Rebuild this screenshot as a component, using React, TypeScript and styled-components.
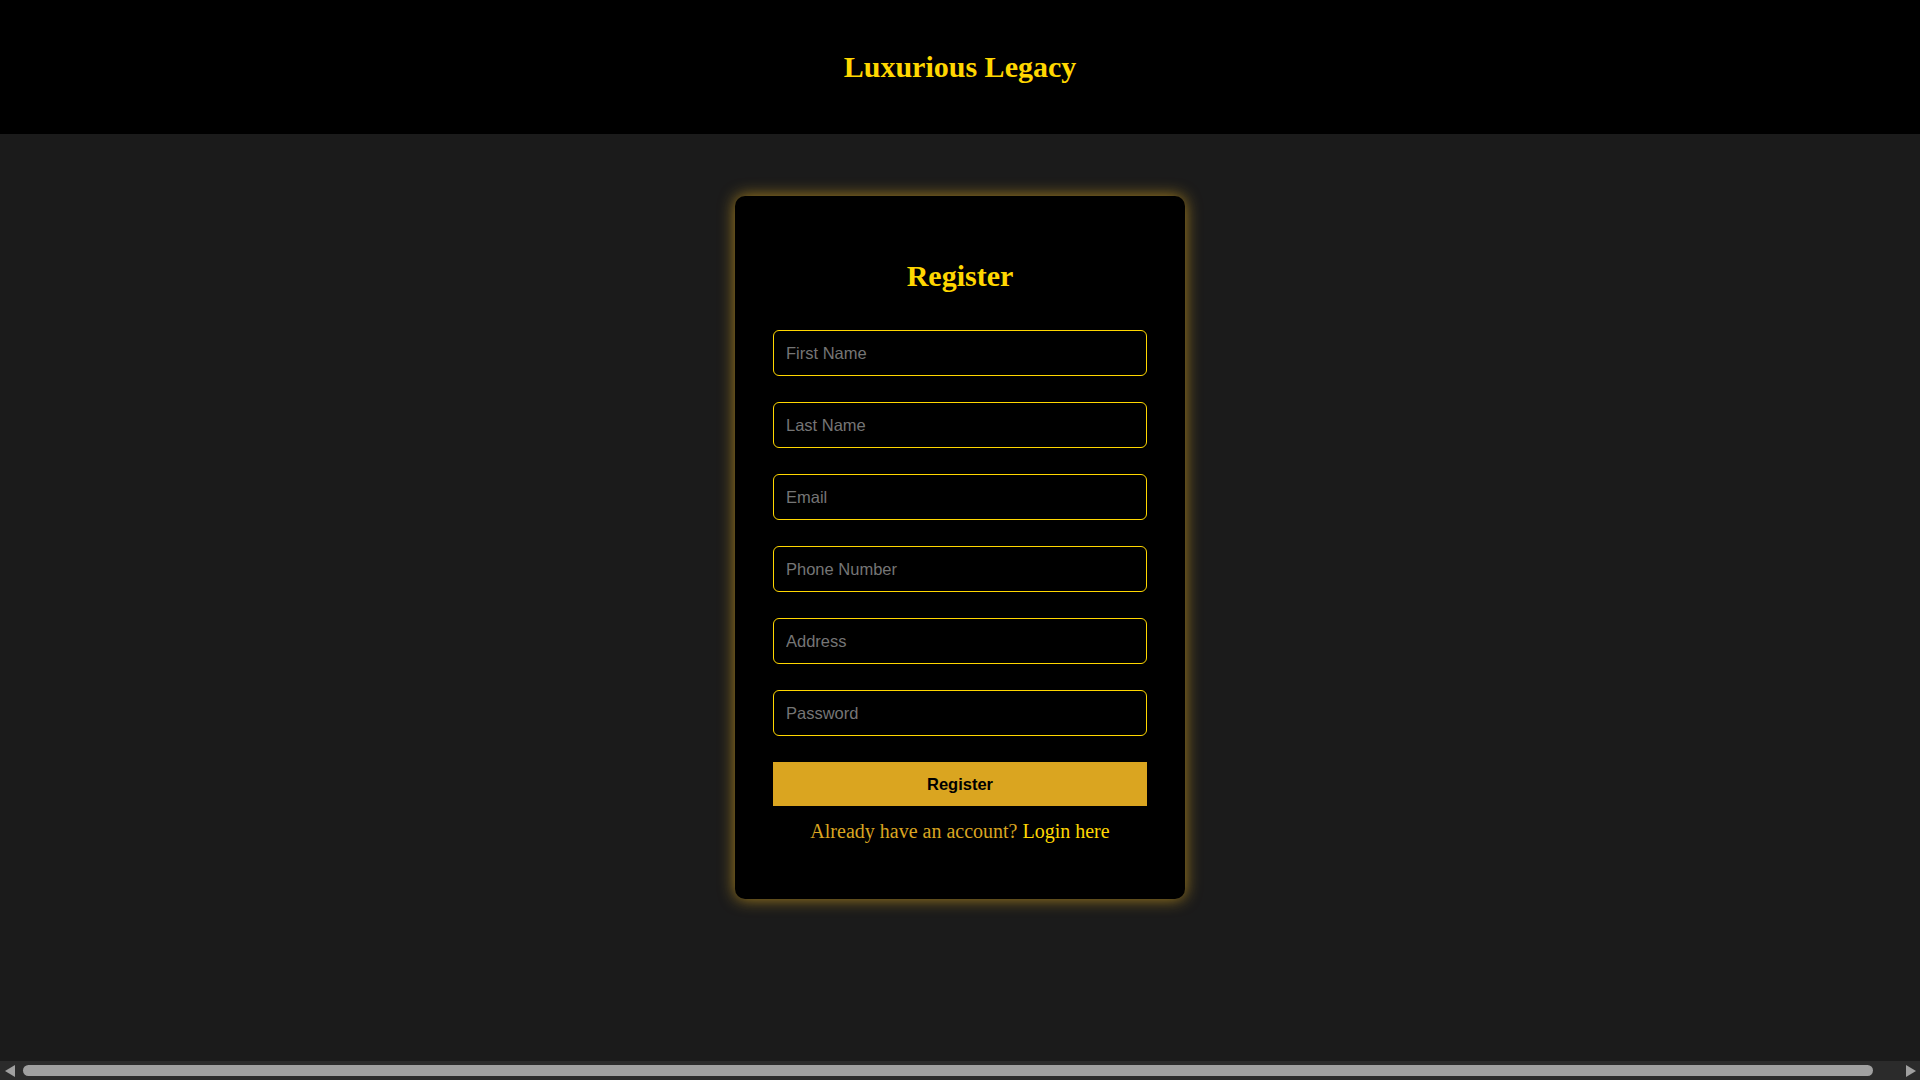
import React from "react";
import styled, { createGlobalStyle } from "styled-components";

const GlobalStyle = createGlobalStyle`
  html {
    color-scheme: dark;
    background: #1b1b1b;
  }
  body {
    margin: 0;
    background: #1b1b1b;
    font-family: "Liberation Serif", "Times New Roman", serif;
  }
  * {
    box-sizing: border-box;
  }
`;

const Page = styled.div`
  display: flex;
  flex-direction: column;
  min-height: 100vh;
  background: #1b1b1b;
`;

const Header = styled.header`
  padding: 49px 0 50px;
  background: #000;
  text-align: center;
`;

const Title = styled.h1`
  margin: 0;
  font-family: "Liberation Serif", "Times New Roman", serif;
  font-size: 30px;
  line-height: 35px;
  font-weight: 700;
  color: #ffd700;
`;

const Main = styled.main`
  display: flex;
  justify-content: center;
  padding-top: 62px;
`;

const Card = styled.div`
  width: 450px;
  display: flex;
  flex-direction: column;
  padding: 62px 38px 56px;
  background: #000;
  border-radius: 10px;
  box-shadow: 0 0 16px rgba(218, 165, 32, 0.75);
`;

const Heading = styled.h2`
  margin: 0 0 37px;
  text-align: center;
  font-family: "Liberation Serif", "Times New Roman", serif;
  font-size: 30px;
  line-height: 35px;
  font-weight: 700;
  color: #ffd700;
`;

const Form = styled.form`
  display: flex;
  flex-direction: column;
  gap: 26px;
`;

const Field = styled.input`
  width: 100%;
  height: 46px;
  padding: 0 12px;
  background: #000;
  border: 1px solid #ffd700;
  border-radius: 6px;
  color: #fff;
  font-family: "Liberation Sans", Arial, sans-serif;
  font-size: 16.5px;
  outline: none;
  &::placeholder {
    color: #757575;
  }
`;

const SubmitButton = styled.button`
  width: 100%;
  height: 44px;
  border: none;
  border-radius: 0;
  background: #daa520;
  color: #000;
  font-family: "Liberation Sans", Arial, sans-serif;
  font-size: 16.5px;
  font-weight: 700;
  cursor: pointer;
`;

const Note = styled.p`
  margin: 14px 0 0;
  text-align: center;
  font-family: "Liberation Serif", "Times New Roman", serif;
  font-size: 20px;
  line-height: 23px;
  color: #daa520;
`;

const LoginLink = styled.a`
  color: #ffd700;
  text-decoration: none;
`;

/* Horizontal page scrollbar seen at the bottom of the window */
const ScrollBar = styled.div`
  position: fixed;
  left: 0;
  right: 0;
  bottom: 0;
  height: 19px;
  display: flex;
  align-items: center;
  background: #2b2b2b;
`;

const ScrollArrow = styled.div`
  width: 19px;
  height: 19px;
  display: flex;
  align-items: center;
  justify-content: center;
  flex-shrink: 0;
`;

const ScrollThumb = styled.div`
  flex: 1;
  height: 11px;
  margin: 0 28px 0 4px;
  border-radius: 6px;
  background: #a0a0a0;
`;

const fields = [
  { name: "firstName", placeholder: "First Name", type: "text" },
  { name: "lastName", placeholder: "Last Name", type: "text" },
  { name: "email", placeholder: "Email", type: "email" },
  { name: "phone", placeholder: "Phone Number", type: "tel" },
  { name: "address", placeholder: "Address", type: "text" },
  { name: "password", placeholder: "Password", type: "password" },
];

export default function App() {
  return (
    <>
      <GlobalStyle />
      <Page>
        <Header>
          <Title>Luxurious Legacy</Title>
        </Header>
        <Main>
          <Card>
            <Heading>Register</Heading>
            <Form onSubmit={(e) => e.preventDefault()}>
              {fields.map((f) => (
                <Field key={f.name} name={f.name} type={f.type} placeholder={f.placeholder} />
              ))}
              <SubmitButton type="submit">Register</SubmitButton>
            </Form>
            <Note>
              Already have an account? <LoginLink href="#">Login here</LoginLink>
            </Note>
          </Card>
        </Main>
      </Page>
      <ScrollBar aria-hidden="true">
        <ScrollArrow>
          <svg width="10" height="12" viewBox="0 0 10 12">
            <path d="M10 0 L0 6 L10 12 Z" fill="#a0a0a0" />
          </svg>
        </ScrollArrow>
        <ScrollThumb />
        <ScrollArrow>
          <svg width="10" height="12" viewBox="0 0 10 12">
            <path d="M0 0 L10 6 L0 12 Z" fill="#a0a0a0" />
          </svg>
        </ScrollArrow>
      </ScrollBar>
    </>
  );
}
